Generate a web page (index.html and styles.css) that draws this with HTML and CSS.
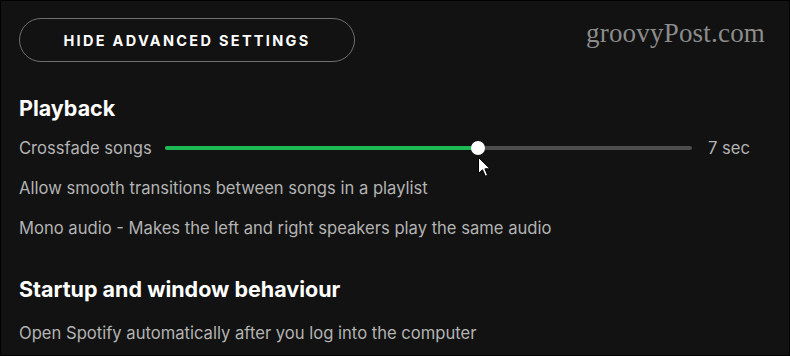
FILE: index.html
```html
<!DOCTYPE html>
<html>
<head>
<meta charset="utf-8">
<link rel="stylesheet" href="styles.css">
</head>
<body>
<div class="page">
  <div class="watermark">groovyPost.com</div>
  <button class="adv-btn">HIDE ADVANCED SETTINGS</button>

  <h2 class="heading first">Playback</h2>
  <div class="row slider-row">
    <span class="label">Crossfade songs</span>
    <div class="track">
      <div class="fill" style="width:59.4%"></div>
      <div class="thumb" style="left:59.4%"></div>
    </div>
    <span class="value">7 sec</span>
  </div>
  <div class="row">Allow smooth transitions between songs in a playlist</div>
  <div class="row">Mono audio - Makes the left and right speakers play the same audio</div>

  <h2 class="heading second">Startup and window behaviour</h2>
  <div class="row">Open Spotify automatically after you log into the computer</div>

  <svg class="cursor" width="13" height="20" viewBox="0 0 13 20">
    <path d="M0.5 0.5 L0.5 16.5 L4.5 12.8 L7.3 19.2 L9.6 18.2 L6.9 11.8 L12 11.8 Z" fill="#fff" stroke="#000" stroke-width="1" stroke-linejoin="miter"/>
  </svg>
</div>
</body>
</html>
```

FILE: styles.css
```css
html, body {
  margin: 0;
  padding: 0;
  background: #121212;
}
.page {
  position: relative;
  box-sizing: border-box;
  width: 790px;
  height: 356px;
  border: 1px solid #000;
  background: #121212;
  padding: 17px 18px 0 18px;
  font-family: Inter, "Noto Sans", sans-serif;
  color: #b3b3b3;
  overflow: hidden;
}
.watermark {
  position: absolute;
  left: 585px;
  top: 17px;
  font-family: "Liberation Serif", "DejaVu Serif", serif;
  font-size: 27px;
  color: #8c8c8c;
  letter-spacing: 0.2px;
}
.adv-btn {
  display: flex;
  align-items: center;
  justify-content: center;
  box-sizing: border-box;
  width: 336px;
  height: 44px;
  margin: 0;
  padding: 0;
  background: transparent;
  border: 1px solid #6e6e6e;
  border-radius: 22px;
  color: #fff;
  font-family: Inter, "Noto Sans", sans-serif;
  font-weight: 700;
  font-size: 14.5px;
  letter-spacing: 2.3px;
}
.heading {
  margin: 0;
  font-size: 21.5px;
  line-height: 24px;
  font-weight: 700;
  color: #fff;
  letter-spacing: 0;
}
.heading.first {
  margin-top: 34px;
  margin-bottom: 8px;
}
.heading.second {
  margin-top: 29px;
  margin-bottom: 12px;
}
.row {
  height: 40px;
  line-height: 40px;
  font-size: 16.6px;
  white-space: nowrap;
}
.slider-row {
  display: flex;
  align-items: center;
  gap: 16px;
}
.label {
  width: 130px;
  flex: none;
}
.track {
  position: relative;
  flex: 1;
  height: 4px;
  border-radius: 2px;
  background: #4d4d4d;
}
.fill {
  height: 4px;
  border-radius: 2px;
  background: #1db954;
}
.thumb {
  position: absolute;
  top: 50%;
  width: 14px;
  height: 14px;
  margin-left: -7px;
  margin-top: -7px;
  border-radius: 50%;
  background: #fff;
}
.value {
  flex: none;
  width: 63px;
}
.cursor {
  position: absolute;
  left: 477px;
  top: 156px;
}
```
